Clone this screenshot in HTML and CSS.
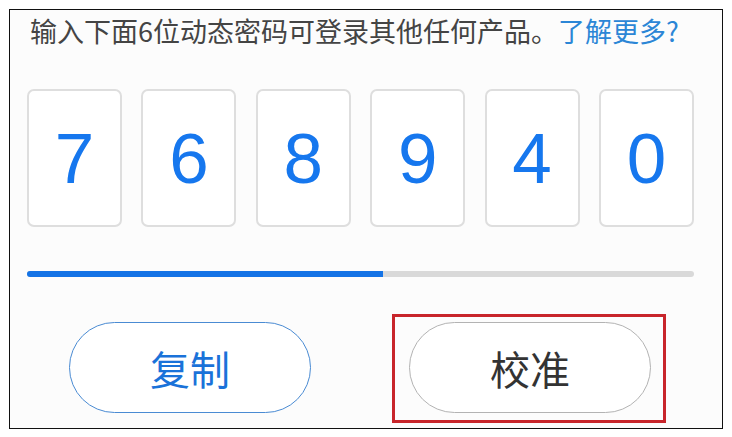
FILE: index.html
```html
<!DOCTYPE html>
<html lang="zh-CN">
  <head>
    <meta charset="UTF-8" />
    <meta name="viewport" content="width=device-width, initial-scale=1.0" />
    <title>动态密码</title>
    <link rel="stylesheet" href="styles.css">
  </head>
  <body>
    <div class="frame">
      <p class="tip">输入下面6位动态密码可登录其他任何产品。<a href="javascript:;" class="tip-link">了解更多?</a></p>

      <ul class="code">
        <li>7</li>
        <li>6</li>
        <li>8</li>
        <li>9</li>
        <li>4</li>
        <li>0</li>
      </ul>

      <div class="progress">
        <div class="progress-bar" style="width: 53.4%"></div>
      </div>

      <div class="actions">
        <a href="javascript:;" class="btn btn-copy">复制</a>
        <span class="mark">
          <a href="javascript:;" class="btn btn-sync">校准</a>
        </span>
      </div>
    </div>
  </body>
</html>
```

FILE: styles.css
```css
html,
body,
ul,
li,
p,
div {
  margin: 0;
  padding: 0;
}

ul,
li {
  list-style: none;
}

a {
  text-decoration: none;
}

body {
  background: #fff;
  font-family: "Noto Sans CJK SC", "Liberation Sans", sans-serif;
}

.frame {
  width: 714px;
  height: 420px;
  margin: 9px;
  border: 1px solid #111;
  box-sizing: border-box;
  background: #fcfcfc;
  padding: 0 28px 0 17px;
  overflow: hidden;
}

.tip {
  margin-top: 4px;
  margin-left: 3px;
  font-size: 27px;
  line-height: 34px;
  color: #444;
  white-space: nowrap;
}

.tip-link {
  color: #2b86d6;
}

.code {
  display: flex;
  justify-content: space-between;
  margin-top: 41px;
  width: 667px;
}

.code > li {
  width: 95px;
  height: 138px;
  box-sizing: border-box;
  border: 2px solid #dedede;
  border-radius: 7px;
  background: #fff;

  display: flex;
  align-items: center;
  justify-content: center;
  font-family: "Liberation Sans", Arial, sans-serif;
  font-size: 71px;
  line-height: 1;
  color: #1677ee;
}

.progress {
  margin-top: 44px;
  width: 667px;
  height: 6px;
  border-radius: 3px;
  background: #d9d9d9;
  overflow: hidden;
}

.progress-bar {
  height: 100%;
  background: #1473e6;
}

.actions {
  display: flex;
  align-items: flex-start;
  margin-top: 37px;
  padding-left: 42px;
  gap: 81px;
}

.btn {
  display: flex;
  align-items: center;
  justify-content: center;
  width: 242px;
  height: 91px;
  box-sizing: border-box;
  border-radius: 46px;
  background: #fff;
  font-size: 40px;
}

.btn-copy {
  margin-top: 8px;
  border: 1px solid #4a8bd3;
  color: #1a72d9;
}

.btn-sync {
  border: 1px solid #b3b3b3;
  color: #333;
}

.mark {
  display: block;
  border: 3px solid #c8252b;
  padding: 5px 12px 7px 14px;
}
```
